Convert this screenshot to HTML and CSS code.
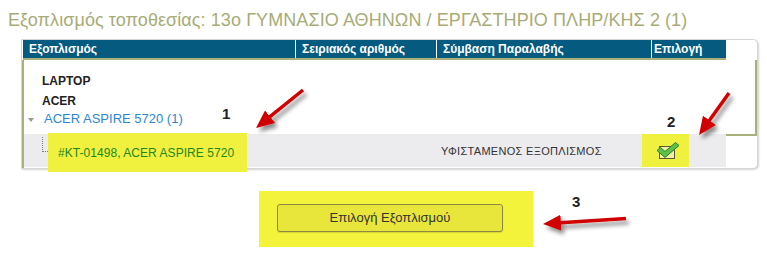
FILE: index.html
```html
<!DOCTYPE html>
<html lang="el">
<head>
<meta charset="utf-8">
<title>Επιλογή Εξοπλισμού</title>
<link rel="stylesheet" href="styles.css">
</head>
<body>
<div class="page">
  <div class="title">Εξοπλισμός τοποθεσίας: 13ο ΓΥΜΝΑΣΙΟ ΑΘΗΝΩΝ / ΕΡΓΑΣΤΗΡΙΟ ΠΛΗΡ/ΚΗΣ 2 (1)</div>
  <div class="panel">
    <div class="head">
      <div class="th th1">Εξοπλισμός</div>
      <div class="th th2">Σειριακός αριθμός</div>
      <div class="th th3">Σύμβαση Παραλαβής</div>
      <div class="th th4">Επιλογή</div>
    </div>
    <div class="body">
      <div class="tree">
        <div class="node bold">LAPTOP</div>
        <div class="node bold">ACER</div>
        <div class="node model"><span class="caret"></span>ACER ASPIRE 5720 (1)</div>
      </div>
      <div class="row">
        <div class="cell c1"><span class="conn"></span><span class="item">#KT-01498, ACER ASPIRE 5720</span></div>
        <div class="cell c2"></div>
        <div class="cell c3">ΥΦΙΣΤΑΜΕΝΟΣ ΕΞΟΠΛΙΣΜΟΣ</div>
        <div class="cell c4">
          <span class="mark">
            <svg class="check" width="24" height="20" viewBox="0 0 24 20">
              <rect x="3.5" y="5.5" width="15" height="12" fill="#f3f1a6" stroke="#5a5a3a" stroke-width="1"/>
              <polygon points="1,9.5 4.5,6.5 9,10.5 19.5,1.5 23,4.5 9,16.5" fill="#5cc14a" stroke="#2f7d25" stroke-width="1" stroke-linejoin="round"/>
            </svg>
          </span>
        </div>
      </div>
    </div>
  </div>
  <div class="actions">
    <button class="btn" type="button">Επιλογή Εξοπλισμού</button>
  </div>

  <span class="num n1">1</span>
  <span class="num n2">2</span>
  <span class="num n3">3</span>

  <svg class="arrows" width="767" height="256" viewBox="0 0 767 256">
    <defs>
      <filter id="sh" x="-30%" y="-30%" width="160%" height="160%">
        <feDropShadow dx="3" dy="4" stdDeviation="2" flood-color="#000" flood-opacity="0.45"/>
      </filter>
      <marker id="head" markerUnits="userSpaceOnUse" markerWidth="20" markerHeight="18" refX="12" refY="8" orient="auto">
        <path d="M0,0 L18,8 L0,16 z" fill="#d00000"/>
      </marker>
    </defs>
    <g filter="url(#sh)" stroke="#d00000" stroke-width="3.5" fill="none">
      <line x1="303" y1="90" x2="260.7" y2="124.2" marker-end="url(#head)"/>
      <line x1="729" y1="93" x2="702.5" y2="130.1" marker-end="url(#head)"/>
      <line x1="626" y1="218.5" x2="549" y2="223.6" marker-end="url(#head)"/>
    </g>
  </svg>
</div>
</body>
</html>
```
FILE: styles.css
```css
* { box-sizing: border-box; }
html, body { margin: 0; padding: 0; background: #fff; }
body {
  font-family: "Liberation Sans", Arial, sans-serif;
  color: #333;
}
.page {
  position: relative;
  width: 767px;
  height: 256px;
  overflow: hidden;
}
.title {
  margin: 9px 0 0 8px;
  height: 22px;
  line-height: 22px;
  font-size: 18px;
  letter-spacing: 0.08px;
  color: #a7ac77;
  white-space: nowrap;
}
.panel {
  margin: 8px 0 0 21px;
  width: 737px;
  height: 130px;
  border: 1px solid #d6d6d6;
  border-radius: 0 5px 5px 0;
  box-shadow: 1px 1px 2px rgba(0, 0, 0, 0.18);
  background: #fff;
}
.head {
  display: grid;
  grid-template-columns: 272px 141px 215px 75px;
  margin-left: 1px;
  width: 703px;
  height: 20px;
  background: #045a7f;
  border-bottom: 2px solid #a8b07b;
}
.th {
  height: 18px;
  line-height: 18px;
  font-size: 12px;
  font-weight: bold;
  color: #fff;
  padding-left: 6px;
  white-space: nowrap;
}
.th2, .th3, .th4 { border-left: 1px solid #fff; }
.th4 { padding-left: 2px; }
.body {
  border-left: 2px solid #a8b07b;
  height: 108px;
}
.tree {
  width: 733px;
  height: 76px;
  padding: 11px 0 7px 0;
  border-right: 2px solid #a8b07b;
  border-bottom: 2px solid #a8b07b;
}
.node {
  padding-left: 18px;
  height: 20px;
  line-height: 20px;
  font-size: 12px;
  color: #222;
}
.bold { font-weight: bold; }
.model {
  display: flex;
  align-items: center;
  padding-left: 4px;
  height: 16px;
  line-height: 16px;
  font-size: 13px;
  color: #2d88cf;
}
.caret {
  width: 0;
  height: 0;
  margin: 2px 10px 0 0;
  border-left: 3px solid transparent;
  border-right: 3px solid transparent;
  border-top: 4px solid #9a9a9a;
}
.row {
  display: grid;
  grid-template-columns: 271px 141px 215px 75px;
  width: 702px;
  height: 33px;
  margin-top: -2px;
  background: #ececee;
}
.cell {
  display: flex;
  align-items: center;
  height: 33px;
  white-space: nowrap;
}
.c1 { align-items: flex-start; }
.conn {
  margin: 3px 0 0 18px;
  width: 6px;
  height: 15px;
  border-left: 1px dotted #7d7d7d;
  border-bottom: 1px dotted #7d7d7d;
}
.item {
  display: flex;
  align-items: center;
  margin-top: -1px;
  width: 199px;
  height: 39px;
  padding-left: 10px;
  background: #f0f03e;
  font-size: 12px;
  letter-spacing: 0.05px;
  color: #23871f;
}
.c3 {
  padding-left: 5px;
  font-size: 11px;
  letter-spacing: 0.3px;
  color: #333;
}
.c4 { align-items: stretch; }
.mark {
  display: flex;
  align-items: center;
  justify-content: center;
  margin-left: -9px;
  width: 47px;
  height: 33px;
  padding-left: 4px;
  background: #f0f03e;
}
.check { display: block; margin-top: 1px; }
.actions {
  margin: 22px 0 0 259px;
  width: 274px;
  height: 56px;
  padding: 13px 0 0 18px;
  background: #f3f33c;
}
.btn {
  display: block;
  width: 226px;
  height: 28px;
  margin: 0;
  padding: 0;
  border: 1px solid #8b893e;
  border-radius: 3px;
  background: #e9e63b;
  box-shadow: 0 1px 1px rgba(0, 0, 0, 0.12);
  font-family: "Liberation Sans", Arial, sans-serif;
  font-size: 13px;
  color: #333;
  text-align: center;
  line-height: 26px;
}
.num {
  position: absolute;
  font-size: 15px;
  line-height: 15px;
  font-weight: bold;
  color: #222;
}
.n1 { left: 222px; top: 106px; }
.n2 { left: 667px; top: 114px; }
.n3 { left: 572px; top: 194px; }
.arrows {
  position: absolute;
  left: 0;
  top: 0;
  pointer-events: none;
}
```
